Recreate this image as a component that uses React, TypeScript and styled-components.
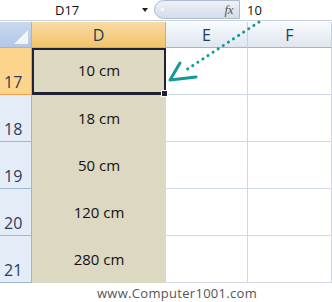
import styled, { createGlobalStyle } from 'styled-components';

const GlobalStyle = createGlobalStyle`
  html, body {
    margin: 0;
    padding: 0;
    background: #ffffff;
  }
  body {
    width: 332px;
    height: 302px;
    overflow: hidden;
    font-family: 'Open Sans', 'Noto Sans', sans-serif;
  }
`;

const ROWS = [
  { num: 17, value: '10 cm' },
  { num: 18, value: '18 cm' },
  { num: 19, value: '50 cm' },
  { num: 20, value: '120 cm' },
  { num: 21, value: '280 cm' }
];

const Sheet = styled.div`
  position: relative;
  width: 332px;
  height: 302px;
  display: flex;
  flex-direction: column;
`;

const FormulaBar = styled.div`
  height: 20px;
  display: flex;
  align-items: center;
  border-bottom: 1px solid #c5d1df;
  font-size: 13px;
  color: #111;
`;

const NameBox = styled.div`
  width: 154px;
  height: 20px;
  display: flex;
  align-items: center;
  padding-left: 55px;
  box-sizing: border-box;
  position: relative;
`;

const DropArrow = styled.span`
  position: absolute;
  left: 142px;
  top: 8px;
  width: 0;
  height: 0;
  border-left: 3px solid transparent;
  border-right: 3px solid transparent;
  border-top: 4px solid #222;
`;

const FxPill = styled.div`
  width: 86px;
  height: 19px;
  margin-top: -1px;
  border: 1px solid #aebbcc;
  border-radius: 10px 0 0 10px;
  background: linear-gradient(#eef2f8, #d3dcea);
  box-sizing: border-box;
  display: flex;
  align-items: center;
  justify-content: space-between;
  padding: 0 6px 0 5px;
`;

const PillKnob = styled.span`
  width: 6px;
  height: 6px;
  border-radius: 50%;
  background: radial-gradient(circle at 40% 40%, #ffffff, #c3cddb);
`;

const FxLabel = styled.span`
  font-family: 'Liberation Serif', serif;
  font-style: italic;
  font-size: 13px;
  color: #555;
  letter-spacing: -0.5px;
`;

const FormulaText = styled.div`
  padding-left: 7px;
`;

const Spacer = styled.div`
  height: 1px;
  background: #ffffff;
`;

const Grid = styled.div`
  display: grid;
  grid-template-columns: 32px 134px 82px 84px;
  grid-template-rows: 26px repeat(5, 47px);
`;

const Corner = styled.div`
  position: relative;
  background: linear-gradient(#c8d8ee, #b3c8e6);
  border-right: 1px solid #9eb6ce;
  border-bottom: 1px solid #9eb6ce;
  box-sizing: border-box;
  &::after {
    content: '';
    position: absolute;
    right: 3px;
    bottom: 3px;
    width: 0;
    height: 0;
    border-left: 14px solid transparent;
    border-bottom: 14px solid #f2f5fa;
  }
`;

const ColHeader = styled.div<{ $active?: boolean }>`
  display: flex;
  align-items: center;
  justify-content: center;
  font-size: 16px;
  box-sizing: border-box;
  color: #1d3c5a;
  background: ${(p) =>
    p.$active
      ? 'linear-gradient(#f9dba4, #f1c36a)'
      : 'linear-gradient(#f8fafd, #dfe6ef)'};
  border-right: 1px solid ${(p) => (p.$active ? '#f2a24c' : '#c5d1df')};
  border-bottom: 1px solid ${(p) => (p.$active ? '#f2a24c' : '#9eb6ce')};
`;

const RowHeader = styled.div<{ $active?: boolean }>`
  display: flex;
  align-items: flex-end;
  padding: 0 0 1px 4px;
  box-sizing: border-box;
  font-size: 16px;
  color: #243f5c;
  background: ${(p) => (p.$active ? '#fdd48c' : '#e4ecf7')};
  border-right: 1px solid ${(p) => (p.$active ? '#f2a24c' : '#9eb6ce')};
  border-bottom: 1px solid ${(p) => (p.$active ? '#f2a24c' : '#9eb6ce')};
`;

const ValueCell = styled.div<{ $selected?: boolean }>`
  position: relative;
  display: flex;
  align-items: center;
  justify-content: center;
  padding-bottom: 2px;
  box-sizing: border-box;
  background: #ddd8c2;
  font-size: 15px;
  color: #111;
  border: ${(p) => (p.$selected ? '2px solid #1f2236' : 'none')};
  border-bottom: ${(p) => (p.$selected ? '3px solid #1f2236' : 'none')};
  ${(p) =>
    p.$selected &&
    `
    &::after {
      content: '';
      position: absolute;
      right: -4px;
      bottom: -5px;
      width: 5px;
      height: 5px;
      background: #1f2236;
      border: 1px solid #fff;
      z-index: 2;
    }
  `}
`;

const EmptyCell = styled.div`
  box-sizing: border-box;
  background: #ffffff;
  border-right: 1px solid #d0d7e5;
  border-bottom: 1px solid #d0d7e5;
`;

const Footer = styled.div`
  flex: 1;
  display: flex;
  align-items: center;
  justify-content: center;
  padding-left: 22px;
  font-size: 13px;
  color: #555;
  letter-spacing: 0.3px;
`;

const Overlay = styled.svg`
  position: absolute;
  left: 0;
  top: 0;
  pointer-events: none;
`;

export default function App() {
  return (
    <>
      <GlobalStyle />
      <Sheet>
        <FormulaBar>
          <NameBox>
            D17
            <DropArrow />
          </NameBox>
          <FxPill>
            <PillKnob />
            <FxLabel>fx</FxLabel>
          </FxPill>
          <FormulaText>10</FormulaText>
        </FormulaBar>
        <Spacer />
        <Grid>
          <Corner />
          <ColHeader $active>D</ColHeader>
          <ColHeader>E</ColHeader>
          <ColHeader>F</ColHeader>
          {ROWS.map((r, i) => (
            <>
              <RowHeader key={`h${r.num}`} $active={i === 0}>
                {r.num}
              </RowHeader>
              <ValueCell key={`d${r.num}`} $selected={i === 0}>
                {r.value}
              </ValueCell>
              <EmptyCell key={`e${r.num}`} />
              <EmptyCell key={`f${r.num}`} />
            </>
          ))}
        </Grid>
        <Footer>www.Computer1001.com</Footer>
        <Overlay width="332" height="302" viewBox="0 0 332 302">
          <line
            x1="259"
            y1="22"
            x2="183"
            y2="72"
            stroke="#129a96"
            strokeWidth="3"
            strokeLinecap="round"
            strokeDasharray="0.1 6"
          />
          <path
            d="M180 63 L170 80 L196 77"
            fill="none"
            stroke="#129a96"
            strokeWidth="3"
            strokeLinecap="round"
            strokeLinejoin="round"
          />
        </Overlay>
      </Sheet>
    </>
  );
}
